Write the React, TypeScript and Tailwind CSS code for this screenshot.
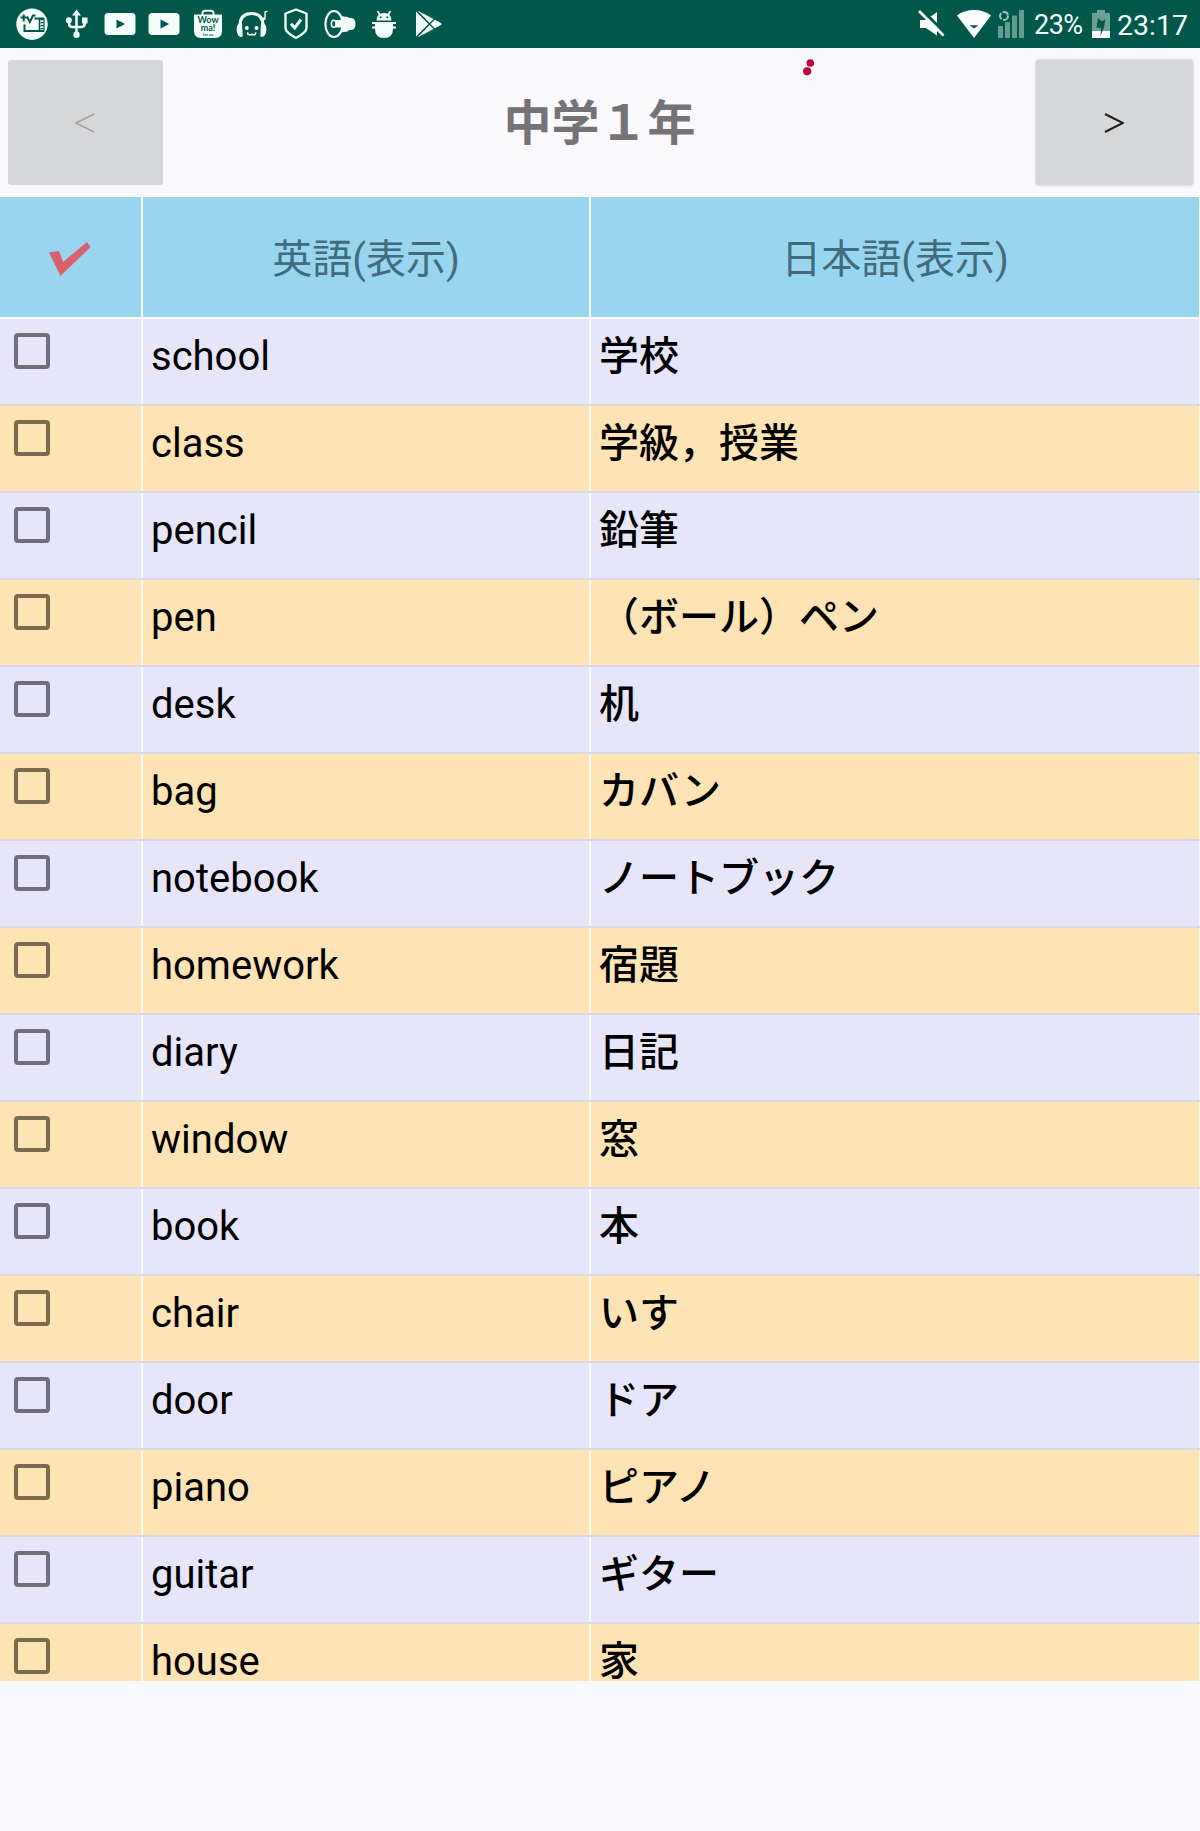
import React, { useState } from "react";

type Word = { en: string; ja: string };

const words: Word[] = [
  { en: "school", ja: "学校" },
  { en: "class", ja: "学級，授業" },
  { en: "pencil", ja: "鉛筆" },
  { en: "pen", ja: "（ボール）ペン" },
  { en: "desk", ja: "机" },
  { en: "bag", ja: "カバン" },
  { en: "notebook", ja: "ノートブック" },
  { en: "homework", ja: "宿題" },
  { en: "diary", ja: "日記" },
  { en: "window", ja: "窓" },
  { en: "book", ja: "本" },
  { en: "chair", ja: "いす" },
  { en: "door", ja: "ドア" },
  { en: "piano", ja: "ピアノ" },
  { en: "guitar", ja: "ギター" },
  { en: "house", ja: "家" },
];

const GREEN = "#00574a";

function Icon({ children }: { children: React.ReactNode }) {
  return (
    <svg viewBox="0 0 32 32" className="h-8 w-8 shrink-0" fill="#f4fffc">
      {children}
    </svg>
  );
}

function YoutubeIcon() {
  return (
    <Icon>
      <rect x="0.5" y="5" width="31" height="22" rx="4" />
      <path d="M12.5 11.5v9l8.5-4.5z" fill={GREEN} />
    </Icon>
  );
}

function NotificationIcons() {
  return (
    <div className="flex gap-3">
      {/* TV */}
      <Icon>
        <circle cx="16" cy="16.2" r="15.7" />
        <g fill="none" stroke={GREEN} strokeWidth="2">
          <path d="M4.5 9.5h6.5M7.7 6.5v7M11 8.500l2.800 5.500L17 7.500h2.500" />
          <path d="M8.500 16.500V23H28M18.500 10.500H28" />
          <path d="M23.500 10v13.500" strokeWidth="1.600" />
          <path d="M28 10v13.500" strokeWidth="1.200" />
          <path d="M26 11v12" strokeWidth="3" strokeDasharray="1.300 1.700" />
        </g>
      </Icon>
      {/* USB */}
      <Icon>
        <path d="M16.500 1.500l4.500 6h-9zM22 9.500h5.500v6H22z" />
        <circle cx="8.800" cy="12.300" r="3" />
        <circle cx="16.500" cy="26.800" r="3.200" />
        <path
          d="M16.500 6v20M9 13v2.500q0 3.500 3.500 3.500H21q3.700 0 3.700-3.500V13"
          fill="none"
          stroke="#f4fffc"
          strokeWidth="2.500"
        />
      </Icon>
      <YoutubeIcon />
      <YoutubeIcon />
      {/* Wowma */}
      <Icon>
        <path d="M10.500 8V5.500Q10.500 2.800 13 2.800h6q2.500 0 2.500 2.700V8" fill="none" stroke="#f4fffc" strokeWidth="2" />
        <path d="M2 6.500h28V23q0 7-7 7H9q-7 0-7-7z" />
        <g fill={GREEN} fontFamily="Lato, sans-serif" fontWeight="700" textAnchor="middle">
          <text x="16" y="14.500" fontSize="9">Wow</text>
          <text x="16" y="22.700" fontSize="9">ma!</text>
          <text x="16" y="28" fontSize="4">for au</text>
        </g>
      </Icon>
      {/* Headphones */}
      <Icon>
        <path d="M4 17.500Q4 5.500 15.500 5.500T27 17.500" fill="none" stroke="#f4fffc" strokeWidth="3" />
        <path d="M4.500 15Q.500 16 .600 21.500q.200 6 3.900 7.500l2.200-.500-.700-13.500zM26.500 15q4 1 3.900 6.500-.200 6-3.900 7.500l-2.200-.500.700-13.500z" />
        <circle cx="10.800" cy="20" r="2" />
        <circle cx="20.500" cy="20" r="2" />
        <path
          d="M11.800 24.200v1.600q0 1 1.300 1h1.400q1.200 0 1.200-1.300 0 1.300 1.200 1.300h1.400q1.300 0 1.300-1v-1.600"
          fill="none"
          stroke="#f4fffc"
          strokeWidth="1.500"
        />
        <path d="M29 10.500V4l2.500-.800" fill="none" stroke="#f4fffc" strokeWidth="1.400" />
        <circle cx="28" cy="10.800" r="1.500" />
      </Icon>
      {/* Shield */}
      <Icon>
        <g fill="none" stroke="#f4fffc" strokeWidth="2.400" strokeLinejoin="round">
          <path d="M16 1.500l10.500 4V20q0 4.500-10.500 10Q5.500 24.500 5.500 20V5.500z" />
          <path d="M11 15.800l3.700 4L21 11.500" strokeWidth="3" strokeLinejoin="miter" />
        </g>
      </Icon>
      {/* Megaphone */}
      <Icon>
        <path d="M14 5.500Q17.500 9 22.500 8.700q1.500 0 2.500 1.300h3q3.500 1 3.500 6t-3.500 6h-3q-1 1.700-2.500 1.700-5-.200-8.500 3.300z" />
        <ellipse cx="10" cy="16" rx="8.600" ry="13" fill={GREEN} stroke="#f4fffc" strokeWidth="2.200" />
        <path d="M9.500 12h9.500v7.500H9.500z" />
        <ellipse cx="9.700" cy="15.800" rx="2.300" ry="3.500" fill={GREEN} stroke="#f4fffc" strokeWidth="1.600" />
      </Icon>
      {/* Android debug */}
      <Icon>
        <path d="M8.500 12.500Q8.500 5 16 5t7.500 7.500z" />
        <path d="M9.500 3l2.500 4M22.500 3l-2.500 4" stroke="#f4fffc" strokeWidth="1.600" />
        <path d="M4 15h24M4 19.500h24" stroke="#f4fffc" strokeWidth="2" />
        <path d="M7 15h18v6q0 9-9 9t-9-9z" />
        <circle cx="12.700" cy="9.200" r="1" fill={GREEN} />
        <circle cx="19.300" cy="9.200" r="1" fill={GREEN} />
      </Icon>
      {/* Play store */}
      <Icon>
        <path d="M4 3.500v25l12.500-12.500z" />
        <path d="M5.500 2.500l16 8.500-4 4zM5.500 29.500l16-8.500-4-4zM22.800 11.800l6.200 3.200q1 1 0 2l-6.200 3.200L18.500 16z" />
      </Icon>
    </div>
  );
}

function StatusBar() {
  return (
    <div className="flex h-12 items-center justify-between bg-[#00574a] pl-4 text-[#f4fffc]">
      <NotificationIcons />
      <div className="flex w-[284px] items-center">
        {/* Muted, wifi and signal */}
        <svg viewBox="0 0 108 32" className="h-8 w-[108px] shrink-0" fill="#ffffff">
          <path d="M4 12h6l11-8v23.500L10 20H4z" />
          <path d="M5 1l24 24" stroke={GREEN} strokeWidth="3" />
          <path d="M3 3l24.500 24.500" stroke="#ffffff" strokeWidth="2.600" />
          <path d="M41 7.500Q48 2 58 2t17 5.500L58 30z" />
          <path d="M53.500 17.200h9L58 20.500z" fill={GREEN} />
          <g fill="#659b91">
            <path d="M82 18h5v12h-5zM89 14h5v16h-5zM96 7.500h5V30h-5zM103 2h5v28h-5z" />
          </g>
          <circle cx="88" cy="8" r="4" fill={GREEN} stroke="#9dc5bc" strokeWidth="2" strokeDasharray="7 1.500" />
        </svg>
        <span className="ml-[10px] w-[50px] pt-0.5 text-[27px] leading-[46px] tracking-[-0.5px]">23%</span>
        <svg viewBox="0 0 18 32" className="ml-2 h-8 w-[18px] shrink-0">
          <path d="M0 5h5V2h8v3h5v18H0z" fill="#6a9f95" />
          <path d="M0 23h18v7H0z" fill="#ffffff" />
          <path d="M6 10l4 3.500L13.500 11 12 19l-3.500 9 .500-8-4.500-.500z" fill={GREEN} />
        </svg>
        <span className="ml-[7px] pt-[3px] text-[28.5px] leading-[45px]">23:17</span>
      </div>
    </div>
  );
}

function Header() {
  return (
    <header className="relative flex h-[149px] items-start justify-between bg-[#fafafc] pt-3 pr-[7px] pl-2">
      <button className="flex h-[125px] w-[155px] items-center justify-center rounded-[3px] bg-[#d6d7d8]" disabled>
        <svg viewBox="0 0 20 20" className="mr-0.5 h-5 w-5" fill="none" stroke="#a3a3a4" strokeWidth="1.800">
          <path d="M19 1L1 10l18 9" />
        </svg>
      </button>
      <h1 className="pt-[29px] text-[48px] leading-[70px] font-bold text-[#757378]">中学１年</h1>
      <button className="flex h-[125px] w-[157px] items-center justify-center rounded-[3px] bg-[#d6d7d8] shadow-[0_0_3px_rgba(0,0,0,0.25)]">
        <svg viewBox="0 0 20 20" className="h-5 w-5" fill="none" stroke="#1c1c1c" strokeWidth="2">
          <path d="M1 1l18 9-18 9" />
        </svg>
      </button>
      {/* Loading dots */}
      <svg viewBox="0 0 12 18" className="absolute top-[10px] left-[803px] h-[18px] w-3" fill="#c2003f">
        <circle cx="7.300" cy="5" r="3.800" />
        <circle cx="4.200" cy="13.300" r="4.100" />
      </svg>
    </header>
  );
}

function WordRow({ word, odd, last }: { word: Word; odd: boolean; last: boolean }) {
  const [checked, setChecked] = useState(false);
  const cell = odd ? "bg-[#fee3b4]" : "bg-[#e7e5fa]";
  const size = last ? "h-[57px]" : "h-[87px] border-b-2 border-[#dcdae0]";

  return (
    <div className={`grid shrink-0 grid-cols-[141px_446px_608px] gap-x-0.5 bg-[#fafafc] ${size}`}>
      <div className={`${cell} pt-[14px] pl-[14px]`}>
        <button
          className={`block h-9 w-9 rounded-[4px] border-4 ${odd ? "border-[#7a6b50]" : "border-[#706d7c]"}`}
          aria-pressed={checked}
          onClick={() => setChecked(!checked)}
        />
      </div>
      <div className={`${cell} pt-[19px] pl-2 text-[40px] leading-[38px]`}>{word.en}</div>
      <div className={`${cell} pt-[19px] pl-2 text-[40px] leading-[38px] font-medium`}>{word.ja}</div>
    </div>
  );
}

export default function App() {
  return (
    <div className="h-[1831px] w-[1200px] bg-[#fafafc] font-['Roboto','Noto_Sans_CJK_JP',sans-serif] text-black">
      <StatusBar />
      <Header />

      <div className="mb-0.5 grid h-[120px] grid-cols-[141px_446px_608px] gap-x-0.5 text-[40px] text-[#426b7b]">
        <div className="flex items-center bg-[#9ad5ef] pl-12">
          <svg viewBox="0 0 44 36" className="mt-1 h-9 w-11" fill="#d9606c">
            <path d="M1 11.500L11 10l4 11L39 1l3.500 5L12.500 35z" />
          </svg>
        </div>
        <div className="flex items-center justify-center bg-[#9ad5ef] pt-[5px]">英語(表示)</div>
        <div className="flex items-center justify-center bg-[#9ad5ef] pt-[5px]">日本語(表示)</div>
      </div>

      <div className="flex flex-col">
        {words.map((word, i) => (
          <WordRow key={word.en} word={word} odd={i % 2 === 1} last={i === words.length - 1} />
        ))}
      </div>
    </div>
  );
}
